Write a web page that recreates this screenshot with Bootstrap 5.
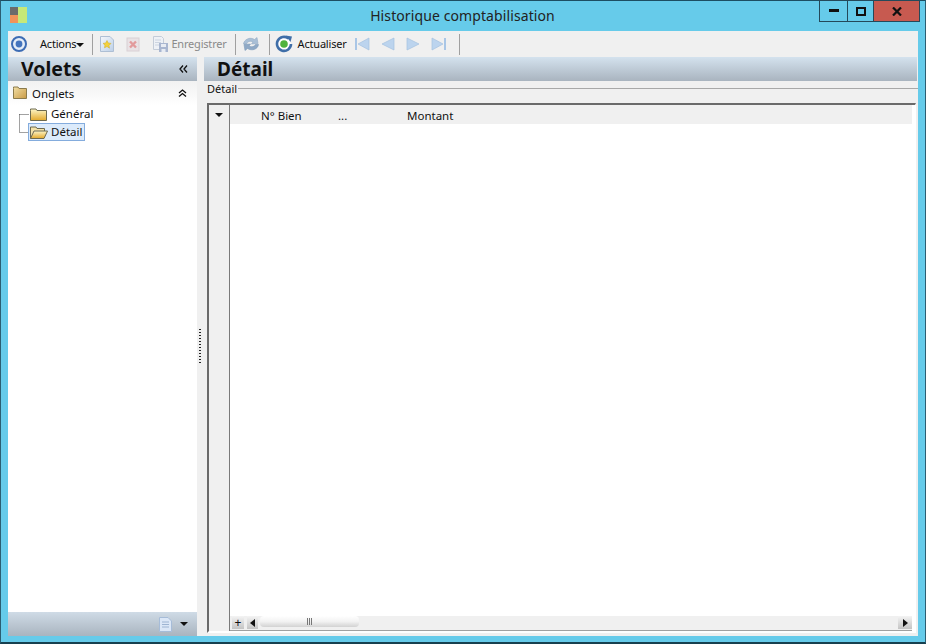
<!DOCTYPE html>
<html lang="fr">
<head>
<meta charset="utf-8">
<title>Historique comptabilisation</title>
<link rel="stylesheet" href="https://cdn.jsdelivr.net/npm/bootstrap@5.3.0/dist/css/bootstrap.min.css">
<style>
html,body{height:100%;margin:0;overflow:hidden}
body{font-family:"Noto Sans","Open Sans",sans-serif;font-size:11.5px;color:#111;background:#66cbea}
.win{width:926px;height:644px;border-top:1px solid #1d4e62;border-left:1px solid #2b5e72;border-right:1px solid #2b5e72;border-bottom:2px solid #17404f;padding:0 8px 6px 7px;box-sizing:border-box}
.tbar{height:30px;position:relative}
.appico{width:17px;height:16px;margin-left:2px;margin-top:6px;display:grid;grid-template-columns:8px 9px;grid-template-rows:8px 8px}
.ttl{position:absolute;left:0;right:0;top:6px;text-align:center;font-size:14px;line-height:18px;color:#222;letter-spacing:.1px}
.caps{position:absolute;right:-3px;top:-1px;height:22px;border:1px solid #24495a;width:101px}
.cap{height:20px;display:flex;align-items:center;justify-content:center;border-right:1px solid #24495a}
.cap:last-child{border-right:0}
.toolbar{height:26px;background:#f0f0f0;padding-left:2px;width:910px;font-size:11px;letter-spacing:-.2px}
.tsep{width:1px;height:21px;background:#a0a0a0;margin:0 1px}
.tico{display:block;flex:none}
.mute{color:#8a8a8a}
.panes{height:579px;width:910px}
.left{width:189px;flex:none}
.split{width:7px;flex:none;background:#f0f0f0;position:relative}
.grip{position:absolute;left:2px;top:272px;width:2px;height:35px;background-image:linear-gradient(#222 50%,transparent 50%);background-size:2px 3px}
.right{width:714px;flex:none;background:#f0f0f0}
.phead{height:24px;background:linear-gradient(#d4e2ee,#a9b4bf);font-weight:700;font-size:19px;line-height:24px}
.vtitle{font-size:19.5px}
.onglets{height:24px;background:linear-gradient(#f2f2f2,#f9f9f9 60%,#fff)}
.tree{background:#fff;position:relative;min-height:0}
.tnode{height:18px;position:relative}
.tsel{background:#dcebfb;border:1px solid #84acdd;height:18px;line-height:16px;align-items:center}
.pfoot{height:24px;background:linear-gradient(#cfdbe6,#a9b4bf)}
.lgroup{height:22px;position:relative;font-size:11px}
.lgroup span{position:absolute;left:3px;top:1px;line-height:14px;background:#f0f0f0;padding-right:1px;z-index:1}
.lgroup i{position:absolute;left:3px;right:0;top:7px;height:1px;background:#a8a8a8}
.gridbox{margin-left:3px;margin-right:2px;height:530px;border-top:2px solid #6a6a6a;border-left:2px solid #6a6a6a;border-right:1px solid #fff;border-bottom:2px solid #fff;background:#fff}
.gleft{width:21px;flex:none;background:#f0f0f0;border-right:1px solid #7a7a7a}
.ghead{height:19px;background:#f0f0f0;position:relative;margin-right:3px}
.ghead span{position:absolute;top:3px;line-height:16px}
.sbar{height:15px;background:#f0f0f0;margin-right:3px;border-bottom:1px solid #a0a0a0;padding-left:2px}
.sbtn{background:linear-gradient(#f4f4f4,#c4c4c4);height:13px;width:12px;flex:none;display:flex;align-items:center;justify-content:center;line-height:1}
.thumb{width:99px;height:11px;margin-left:2px;background:linear-gradient(#fff,#f2f2f2 50%,#d2d2d2);border-radius:4px;display:flex;align-items:center;justify-content:center;gap:1px}
.thumb b{display:block;width:1px;height:7px;background:#777}
</style>
</head>
<body>
<div class="win d-flex flex-column">
  <div class="tbar">
    <div class="appico"><div style="background:#6b6b6b"></div><div style="background:#c6e878;grid-row:span 2"></div><div style="background:#f0935a"></div></div>
    <div class="ttl">Historique comptabilisation</div>
    <div class="caps d-flex">
      <div class="cap" style="width:28px"><svg width="10" height="4"><rect width="10" height="3" fill="#111"/></svg></div>
      <div class="cap" style="width:26px"><svg width="10" height="9"><rect x="1" y="1" width="8" height="7" fill="none" stroke="#111" stroke-width="2"/></svg></div>
      <div class="cap flex-grow-1" style="background:#c75a50"><svg width="10" height="9"><path d="M1 .5L9 8.500M9 .5L1 8.500" stroke="#111" stroke-width="2.200"/></svg></div>
    </div>
  </div>
  <div class="toolbar d-flex align-items-center">
    <svg class="tico" width="18" height="18" viewBox="0 0 18 18"><circle cx="9" cy="9" r="7" fill="#e4edf8" stroke="#3d6cb4" stroke-width="2"/><circle cx="9" cy="9" r="3.400" fill="#4474bd"/></svg>
    <span style="margin-left:12px">Actions</span>
    <svg class="tico" width="8" height="4" style="margin:1px 7px 0 0"><path d="M0 0H8L4 4Z" fill="#111"/></svg>
    <div class="tsep"></div>
    <svg class="tico" width="16" height="18" viewBox="0 0 16 18" style="margin:0 9px 0 5px"><defs><linearGradient id="pg" x1="0" y1="0" x2="1" y2="1"><stop offset="0" stop-color="#f4f7fb"/><stop offset="1" stop-color="#bcd0e8"/></linearGradient></defs><path d="M1.500 1.500H11L14.500 5V16.500H1.500Z" fill="url(#pg)" stroke="#aebfd4"/><path d="M8 5.500l1.300 2.500 2.700.4-2 2 .5 2.800L8 11.500 5.500 12.800 6 10 4 8.400l2.700-.4Z" fill="#f4d23a" stroke="#d0a820" stroke-width=".5"/></svg>
    <svg class="tico" width="16" height="17" viewBox="0 0 16 17" style="margin:0 11px 0 1px"><rect x="2" y="2" width="12" height="13" fill="#e9e2e5" stroke="#d8d0d4"/><path d="M5 5.500L11 11.500M11 5.500L5 11.500" stroke="#e29a9c" stroke-width="2.400"/></svg>
    <svg class="tico" width="17" height="18" viewBox="0 0 17 18"><path d="M1.500 1.500H9.500L11.500 3.500V14.500H1.500Z" fill="#eef1f6" stroke="#c4ccd8"/><path d="M3 5H9M3 7.500H9M3 10H7" stroke="#ccd4e0"/><rect x="7" y="8" width="9" height="9" fill="#a9b6d0"/><rect x="9" y="9" width="5" height="3" fill="#e8ecf3"/><rect x="9.500" y="14" width="4" height="3" fill="#e8ecf3"/></svg>
    <span class="mute" style="margin-left:2px;margin-right:7px">Enregistrer</span>
    <div class="tsep"></div>
    <svg class="tico" width="18" height="18" viewBox="0 0 18 18" style="margin:0 8px 0 5px"><path d="M1.500 9C2 4.500 8 1.500 12.500 4.500L15 2.500L16 8.500L9.500 9L11 7C8.500 5.500 5.500 6.500 4.500 9Z" fill="#a9bfd6" stroke="#93abc4" stroke-width=".6"/><path d="M16.500 9.500C16 14 10 16.500 5.500 13.500L3 15.500L2 9.500L8.500 9L7 11C9.500 12.500 12.500 11.500 13.500 9.500Z" fill="#8fa9c6" stroke="#7e9ab8" stroke-width=".6"/></svg>
    <div class="tsep"></div>
    <svg class="tico" width="18" height="18" viewBox="0 0 18 18" style="margin:0 5px 0 4px"><path d="M13.500 3.500A7 7 0 1 0 16 9" fill="#fff" stroke="#3f6ea8" stroke-width="2.600"/><path d="M10.500 .5L17 1.500L15.500 7Z" fill="#3f6ea8"/><circle cx="9" cy="9" r="3.800" fill="#4fb33d"/></svg>
    <span>Actualiser</span>
    <svg class="tico" width="16" height="14" viewBox="0 0 16 14" style="margin-left:7px"><rect x="1" y="1" width="2" height="12" fill="#a9c6e6"/><path d="M15 1V13L4 7Z" fill="#bcd4ee" stroke="#a5c1e0" stroke-width=".7"/></svg>
    <svg class="tico" width="14" height="14" viewBox="0 0 14 14" style="margin-left:11px"><path d="M13 1V13L1 7Z" fill="#bcd4ee" stroke="#a5c1e0" stroke-width=".7"/></svg>
    <svg class="tico" width="14" height="14" viewBox="0 0 14 14" style="margin-left:11px"><path d="M1 1V13L13 7Z" fill="#bcd4ee" stroke="#a5c1e0" stroke-width=".7"/></svg>
    <svg class="tico" width="16" height="14" viewBox="0 0 16 14" style="margin-left:11px"><rect x="13" y="1" width="2" height="12" fill="#a9c6e6"/><path d="M1 1V13L12 7Z" fill="#bcd4ee" stroke="#a5c1e0" stroke-width=".7"/></svg>
    <div class="tsep" style="margin-left:12px"></div>
  </div>
  <div class="panes d-flex">
    <div class="left d-flex flex-column">
      <div class="phead d-flex justify-content-between" style="padding-left:13px;padding-right:9px"><span class="vtitle">Volets</span>
        <svg class="align-self-center" width="9" height="8" viewBox="0 0 9 8"><path d="M4 .5L1 4L4 7.500M8 .5L5 4L8 7.500" fill="none" stroke="#111" stroke-width="1.300"/></svg></div>
      <div class="onglets d-flex align-items-center" style="padding-left:5px;padding-right:10px">
        <svg width="14" height="13" viewBox="0 0 14 13" style="margin-top:-1px"><defs><linearGradient id="fa" x1="0" y1="0" x2="1" y2="1"><stop offset="0" stop-color="#f2dfa5"/><stop offset="1" stop-color="#c99a45"/></linearGradient><linearGradient id="fb" x1="0" y1="0" x2="0" y2="1"><stop offset="0" stop-color="#fdf6c8"/><stop offset="1" stop-color="#e3a92c"/></linearGradient></defs><path d="M.5 2.500V1H5L6 2.500H13.500V12.500H.5Z" fill="url(#fa)" stroke="#8a7a4c"/></svg>
        <span style="margin-left:5px;margin-top:1px">Onglets</span>
        <svg class="ms-auto" width="9" height="8" viewBox="0 0 9 8"><path d="M1 4L4.500 1L8 4M1 7.500L4.500 4.500L8 7.500" fill="none" stroke="#111" stroke-width="1.300"/></svg>
      </div>
      <div class="tree flex-grow-1" style="padding:0 0 0 20px">
        <svg width="12" height="28" style="position:absolute;left:11px;top:9px"><path d="M.5 .5H10M.5 .5V18.500H10" fill="none" stroke="#444" stroke-dasharray="1 1"/></svg>
        <div class="tnode d-flex align-items-center" style="padding-left:2px">
          <svg width="18" height="13" viewBox="0 0 18 13"><path d="M.5 2.500V1H6L7 2.500H16.500V12.500H.5Z" fill="url(#fb)" stroke="#6d6a50"/></svg>
          <span style="margin-left:3px">Général</span>
        </div>
        <div class="tnode d-flex"><div class="tsel d-flex" style="width:57px;padding-left:1px">
          <svg width="18" height="13" viewBox="0 0 18 13"><path d="M.5 12.500V1H6L7 2.500H14.500V5" fill="#f3e2a8" stroke="#6d6a50"/><path d="M.5 12.500L4 5H17.500L14 12.500Z" fill="url(#fb)" stroke="#6d6a50"/></svg>
          <span style="margin-left:3px">Détail</span>
        </div></div>
      </div>
      <div class="pfoot d-flex align-items-center justify-content-end" style="padding-right:9px">
        <svg width="13" height="15" viewBox="0 0 13 15"><path d="M.5 .5H9L12.500 4V14.500H.5Z" fill="#dbe7f7" stroke="#a6bcd8"/><path d="M3 5H10M3 7.500H10M3 10H10" stroke="#9db4d2"/></svg>
        <svg width="8" height="4" style="margin-left:8px"><path d="M0 0H8L4 4Z" fill="#111"/></svg>
      </div>
    </div>
    <div class="split"><div class="grip"></div></div>
    <div class="right d-flex flex-column">
      <div class="phead" style="padding-left:13px;margin-right:1px">Détail</div>
      <div class="lgroup"><span>Détail</span><i></i></div>
      <div class="gridbox d-flex">
        <div class="gleft d-flex justify-content-center"><svg width="8" height="4" style="margin-top:8px"><path d="M0 0H8L4 4Z" fill="#111"/></svg></div>
        <div class="flex-grow-1 d-flex flex-column">
          <div class="ghead"><span style="left:31px">N° Bien</span><span style="left:108px">...</span><span style="left:177px">Montant</span></div>
          <div class="flex-grow-1"></div>
          <div class="sbar d-flex align-items-start">
            <div class="sbtn" style="font-size:12px">+</div>
            <div class="sbtn" style="margin-left:3px;width:11px"><svg width="5" height="8"><path d="M5 0V8L0 4Z" fill="#111"/></svg></div>
            <div class="thumb"><b></b><b></b><b></b></div>
            <div class="sbtn ms-auto" style="width:14px"><svg width="5" height="8"><path d="M0 0V8L5 4Z" fill="#111"/></svg></div>
          </div>
        </div>
      </div>
    </div>
  </div>
</div>
</body>
</html>
